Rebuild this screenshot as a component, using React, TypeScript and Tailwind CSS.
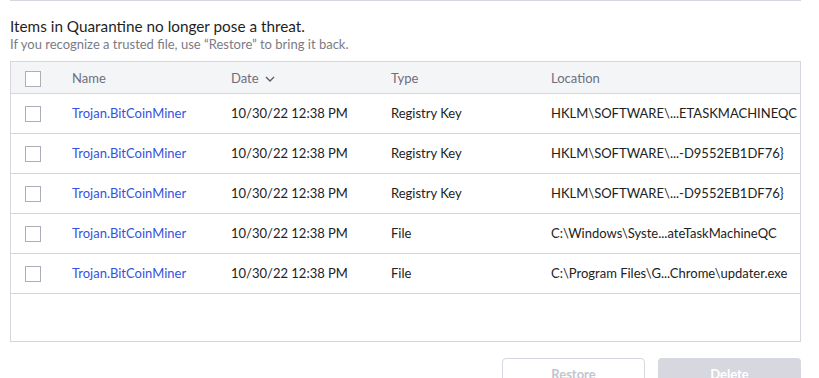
const rows = [
  { type: "Registry Key", location: "HKLM\\SOFTWARE\\...ETASKMACHINEQC" },
  { type: "Registry Key", location: "HKLM\\SOFTWARE\\...-D9552EB1DF76}" },
  { type: "Registry Key", location: "HKLM\\SOFTWARE\\...-D9552EB1DF76}" },
  { type: "File", location: "C:\\Windows\\Syste...ateTaskMachineQC" },
  { type: "File", location: "C:\\Program Files\\G...Chrome\\updater.exe" },
];

function Box() {
  return <span className="block h-4 w-4 shrink-0 border border-[#aeaebb] bg-white" />;
}

export default function App() {
  return (
    <div className="h-[378px] w-[819px] overflow-hidden bg-white font-['Lato',sans-serif] text-[#222]">
      <div className="ml-[10px] w-[791px]">
        <div className="h-px bg-[#d6d6de]" />
        <h1 className="mt-[15px] text-[15.3px] leading-5 text-[#1f1f23]">Items in Quarantine no longer pose a threat.</h1>
        <p className="text-[13px] leading-4 text-[#7b7b85]">If you recognize a trusted file, use “Restore” to bring it back.</p>

        <div className="mt-[9px] flex h-[281px] flex-col border border-[#d6d6de]">
          <div className="flex h-[32px] shrink-0 items-center border-b border-[#d6d6de] bg-[#f4f5f7] pt-[2px] text-[13px] text-[#6e6e7c]">
            <div className="w-[61px] pl-[14px]">
              <Box />
            </div>
            <div className="w-[159px]">Name</div>
            <div className="flex w-[160px] items-center gap-[6px]">
              Date
              <svg width="10" height="6" viewBox="0 0 10 6" fill="none" stroke="#5d5d6a" strokeWidth="1.4">
                <path d="M1 1l4 4 4-4" />
              </svg>
            </div>
            <div className="w-[160px]">Type</div>
            <div>Location</div>
          </div>
          {rows.map((r, i) => (
            <div key={i} className="flex h-[40px] shrink-0 items-center border-b border-[#d6d6de] pt-px text-[13px]">
              <div className="w-[61px] pl-[14px]">
                <Box />
              </div>
              <div className="w-[159px] text-[#3552e0]">Trojan.BitCoinMiner</div>
              <div className="w-[160px]">10/30/22 12:38 PM</div>
              <div className="w-[160px]">{r.type}</div>
              <div className="whitespace-nowrap">{r.location}</div>
            </div>
          ))}
        </div>

        <div className="mt-[16px] flex justify-end gap-[13px]">
          <button className="h-[34px] w-[143px] rounded-[4px] border border-[#d6d6de] bg-white text-[13px] font-bold text-[#c4c4cc]">
            Restore
          </button>
          <button className="h-[34px] w-[143px] rounded-[4px] bg-[#d6d7df] text-[13px] font-bold text-white">Delete</button>
        </div>
      </div>
    </div>
  );
}
